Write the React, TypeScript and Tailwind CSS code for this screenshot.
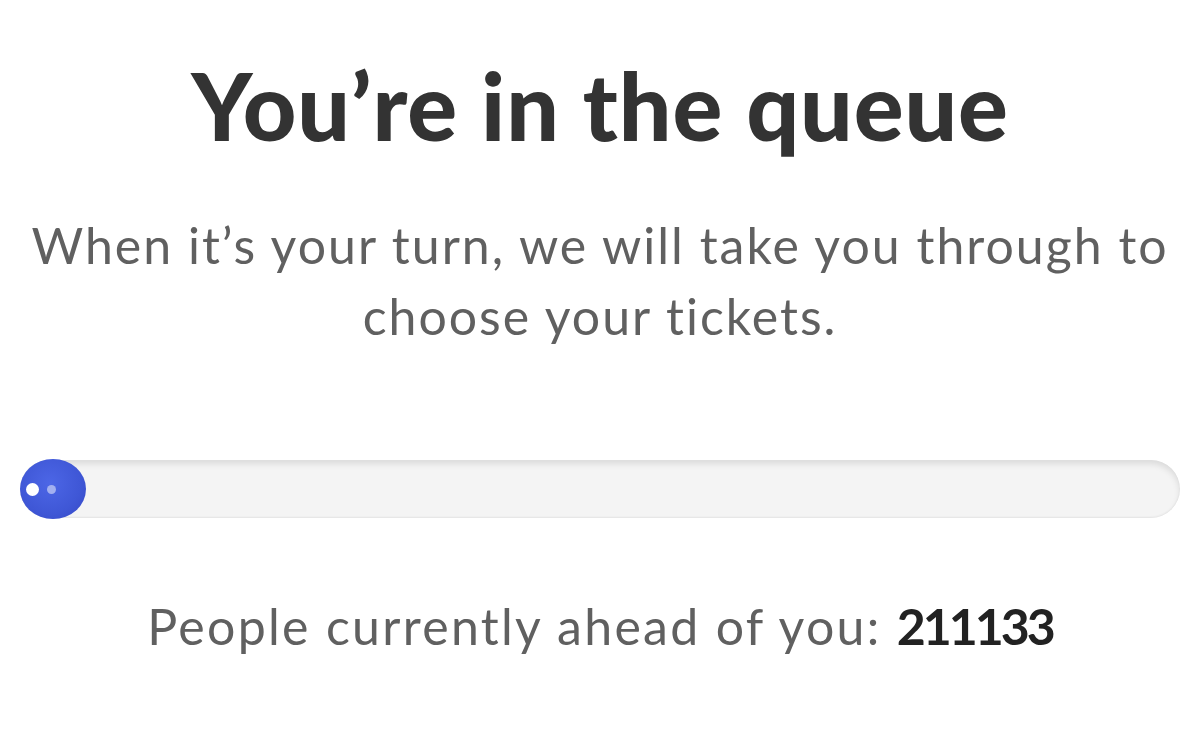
import React from 'react';

// Queue waiting screen: heading, explainer, progress track and position count
function QueueProgress() {
  return (
    <div className="relative mx-[20px] h-[58px] rounded-full bg-[#f4f4f4] shadow-[inset_0_4px_6px_rgba(0,0,0,0.1),inset_0_-1px_2px_rgba(0,0,0,0.06)]">
      {/* spinner knob */}
      <div className="absolute left-0 top-[-1px] flex h-[60px] w-[66px] items-center gap-[8px] rounded-[50%] bg-[radial-gradient(circle_at_45%_40%,#4c66e6_0%,#3f57d6_60%,#3446c4_100%)] pl-[6px]">
        <span className="h-[13px] w-[13px] rounded-full bg-white" />
        <span className="h-[9px] w-[9px] rounded-full bg-[#a3b0f0]" />
      </div>
    </div>
  );
}

export default function App() {
  return (
    <div className="flex h-[750px] w-[1200px] flex-col bg-white font-['Lato','Liberation_Sans',sans-serif]">
      <h1 className="mt-[55px] text-center text-[93px] font-black leading-[100px] tracking-[0.9px] text-[#333333]">
        You’re in the queue
      </h1>
      <p className="mt-[55px] text-center text-[50px] leading-[71px] tracking-[2px] text-[#606060]">
        When it’s your turn, we will take you through to
        <br />
        choose your tickets.
      </p>
      <div className="mt-[108px]">
        <QueueProgress />
      </div>
      <p className="mt-[78px] text-center text-[50px] leading-[60px] tracking-[2.3px] text-[#606060]">
        People currently ahead of you:{' '}
        <span className="font-bold tracking-[-3px] text-[#222222]">211133</span>
      </p>
    </div>
  );
}
